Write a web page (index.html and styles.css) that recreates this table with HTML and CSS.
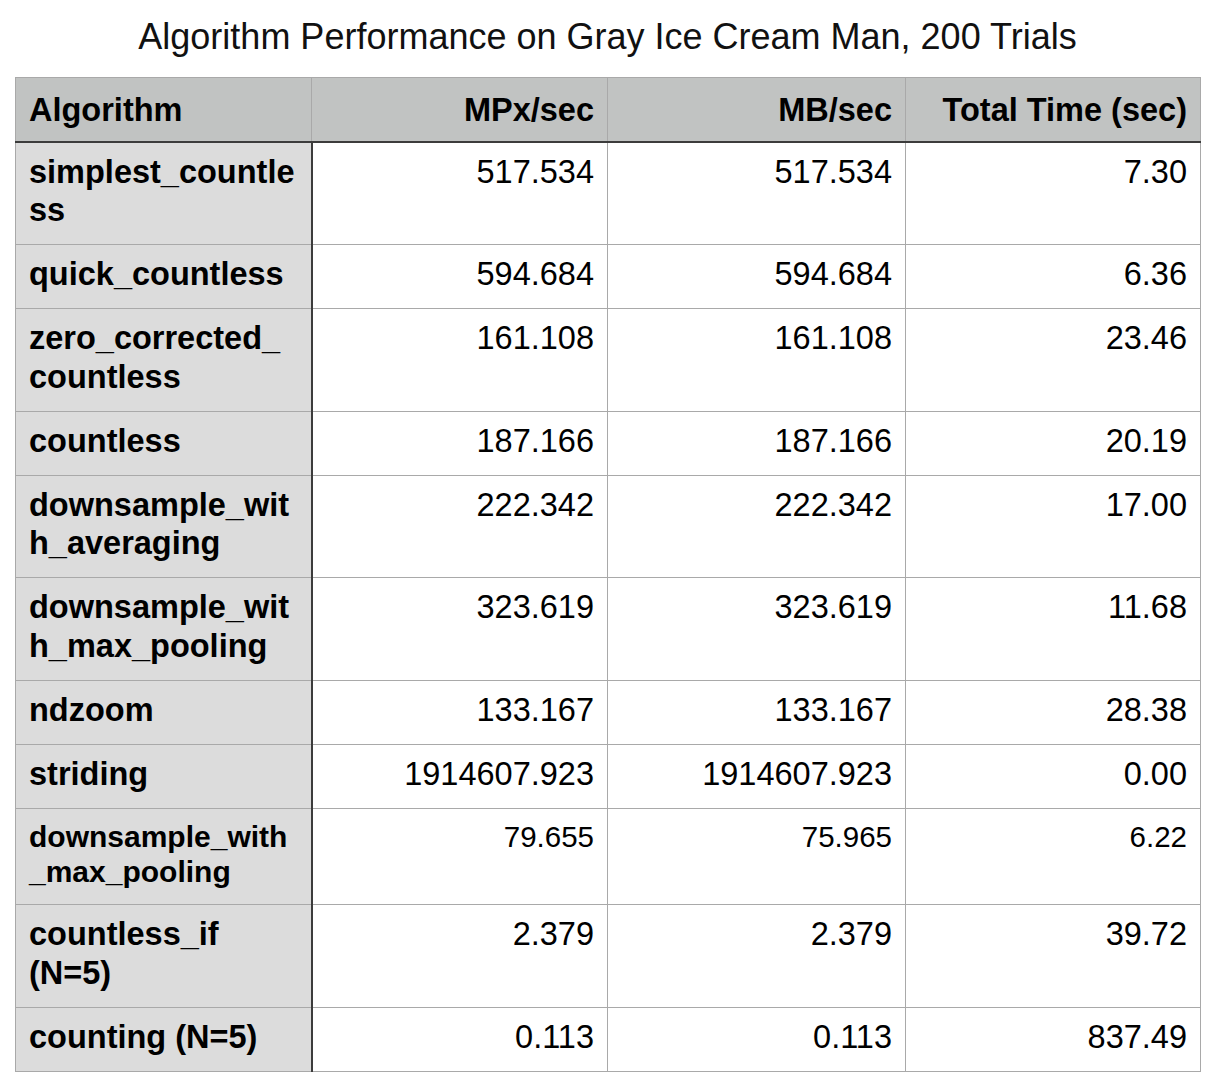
FILE: index.html
```html
<!DOCTYPE html>
<html>
<head>
<meta charset="utf-8">
<link rel="stylesheet" href="styles.css">
</head>
<body>
<div class="page">
  <h1 class="title">Algorithm Performance on Gray Ice Cream Man, 200 Trials</h1>
  <table class="perf">
    <colgroup>
      <col class="c1"><col class="c2"><col class="c3"><col class="c4">
    </colgroup>
    <thead>
      <tr>
        <th class="name">Algorithm</th>
        <th class="num">MPx/sec</th>
        <th class="num">MB/sec</th>
        <th class="num">Total Time (sec)</th>
      </tr>
    </thead>
    <tbody>
      <tr><td class="name">simplest_countle<br>ss</td><td class="num">517.534</td><td class="num">517.534</td><td class="num">7.30</td></tr>
      <tr><td class="name">quick_countless</td><td class="num">594.684</td><td class="num">594.684</td><td class="num">6.36</td></tr>
      <tr><td class="name">zero_corrected_<br>countless</td><td class="num">161.108</td><td class="num">161.108</td><td class="num">23.46</td></tr>
      <tr><td class="name">countless</td><td class="num">187.166</td><td class="num">187.166</td><td class="num">20.19</td></tr>
      <tr><td class="name">downsample_wit<br>h_averaging</td><td class="num">222.342</td><td class="num">222.342</td><td class="num">17.00</td></tr>
      <tr><td class="name">downsample_wit<br>h_max_pooling</td><td class="num">323.619</td><td class="num">323.619</td><td class="num">11.68</td></tr>
      <tr><td class="name">ndzoom</td><td class="num">133.167</td><td class="num">133.167</td><td class="num">28.38</td></tr>
      <tr><td class="name">striding</td><td class="num">1914607.923</td><td class="num">1914607.923</td><td class="num">0.00</td></tr>
      <tr class="small"><td class="name">downsample_with<br>_max_pooling</td><td class="num">79.655</td><td class="num">75.965</td><td class="num">6.22</td></tr>
      <tr><td class="name">countless_if<br>(N=5)</td><td class="num">2.379</td><td class="num">2.379</td><td class="num">39.72</td></tr>
      <tr><td class="name">counting (N=5)</td><td class="num">0.113</td><td class="num">0.113</td><td class="num">837.49</td></tr>
    </tbody>
  </table>
</div>
</body>
</html>
```

FILE: styles.css
```css
html, body {
  margin: 0;
  padding: 0;
  background: #ffffff;
}

body {
  font-family: "Liberation Sans", Arial, sans-serif;
  color: #000000;
}

.page {
  padding: 17px 0 0 15px;
  width: 1185px;
}

.title {
  margin: 0 0 20px 0;
  font-size: 36px;
  line-height: 40px;
  font-weight: normal;
  text-align: center;
  color: #111111;
}

.perf {
  border-collapse: collapse;
  table-layout: fixed;
  width: 1185px;
  font-size: 32.5px;
  line-height: 38.5px;
}

.c1 { width: 296px; }
.c2 { width: 296px; }
.c3 { width: 298px; }
.c4 { width: 295px; }

.perf th,
.perf td {
  border: 1px solid #a9a9a9;
  padding: 10px 13px 14.5px 13px;
  vertical-align: top;
  white-space: nowrap;
  overflow: hidden;
}

.perf th {
  background: #c1c3c2;
  font-weight: bold;
  padding-top: 13px;
  padding-bottom: 11px;
  border-bottom: 2px solid #3c3c3c;
}

.perf .name {
  text-align: left;
  font-weight: bold;
}

.perf td.name {
  background: #dcdcdc;
  border-right: 2px solid #3c3c3c;
}

.perf .num {
  text-align: right;
}

.perf td.num {
  font-weight: normal;
}

.perf tr.small td {
  font-size: 30px;
  line-height: 35.5px;
}

.perf tr.small td.num {
  font-size: 29.5px;
}
```
